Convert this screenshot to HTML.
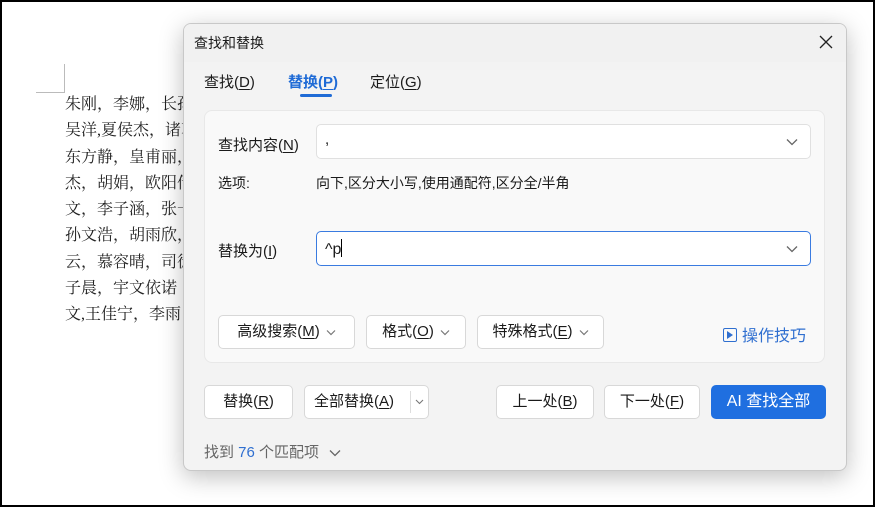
<!DOCTYPE html>
<html><head><meta charset="utf-8"><style>
*{margin:0;padding:0;box-sizing:border-box}
body{width:875px;height:507px;position:relative;background:#fff;overflow:hidden;font-family:"Liberation Sans","Noto Sans CJK SC",sans-serif;color:#1a1a1a}
.frame{position:absolute;left:0;top:0;width:875px;height:507px;border:2px solid #000;z-index:10;pointer-events:none}
.doc{position:absolute;left:65px;top:92px;font-family:"Liberation Serif","Noto Serif CJK SC",serif;font-size:16px;line-height:26.3px;color:#222;white-space:nowrap}
.crop1{position:absolute;left:64px;top:64px;width:1px;height:29px;background:#bbb}
.crop2{position:absolute;left:36px;top:92px;width:29px;height:1px;background:#bbb}
.dlg{position:absolute;left:183px;top:23px;width:664px;height:448px;background:#f3f3f3;border:1px solid #c8c8c8;border-radius:8px;box-shadow:0 6px 24px rgba(0,0,0,.25);overflow:hidden;font-size:15px}
.abs{position:absolute;white-space:nowrap}
.panel{position:absolute;left:20px;top:86px;width:621px;height:253px;background:#f9f9f9;border:1px solid #e8e8e8;border-radius:8px}
.inp{position:absolute;background:#fff;border:1px solid #e0e0e0;border-radius:5px}
.btn{position:absolute;background:#fff;border:1px solid #d8d8d8;border-radius:5px;height:34px;line-height:32px;text-align:center;font-size:15px}
svg.cv{vertical-align:middle;margin-left:6px}
u{text-decoration:underline;text-underline-offset:2px}
</style></head><body>
<div class="crop1"></div><div class="crop2"></div>
<div class="doc">朱刚，李娜，长孙<br>吴洋,夏侯杰，诸葛<br>东方静，皇甫丽，<br>杰，胡娟，欧阳倩<br>文，李子涵，张一<br>孙文浩，胡雨欣，<br>云，慕容晴，司徒<br>子晨，宇文依诺<br>文,王佳宁，李雨</div>
<div class="dlg">
 <div class="abs" style="left:0;top:0;width:664px;height:38px;background:#f1f1f1"></div>
 <div class="abs" style="left:10px;top:9px;font-size:14px">查找和替换</div>
 <svg class="abs" style="left:635px;top:11px" width="14" height="14"><path d="M1 1L13 13M13 1L1 13" stroke="#222" stroke-width="1.3"/></svg>
 <div class="abs" style="left:20px;top:47px">查找(<u>D</u>)</div>
 <div class="abs" style="left:104px;top:47px;color:#1f6bd6;font-weight:bold">替换(<u>P</u>)</div>
 <div class="abs" style="left:116px;top:70px;width:32px;height:3px;background:#1f6bd6;border-radius:2px"></div>
 <div class="abs" style="left:186px;top:47px">定位(<u>G</u>)</div>
 <div class="panel">
  <div class="abs" style="left:13px;top:23px">查找内容(<u>N</u>)</div>
  <div class="inp" style="left:111px;top:13px;width:495px;height:35px"><span class="abs" style="left:8px;top:6px">,</span><svg class="abs" style="left:469px;top:13px" width="12" height="8"><path d="M1 1.5L6 6.5L11 1.5" fill="none" stroke="#666" stroke-width="1.3"/></svg></div>
  <div class="abs" style="left:13px;top:62px;font-size:14px">选项:</div>
  <div class="abs" style="left:111px;top:62px;font-size:14px">向下,区分大小写,使用通配符,区分全/半角</div>
  <div class="abs" style="left:13px;top:129px">替换为(<u>I</u>)</div>
  <div class="inp" style="left:111px;top:120px;width:495px;height:35px;border-color:#3a7be0"><span class="abs" style="left:8px;top:7px;font-size:16px">^p<span style="display:inline-block;width:1px;height:18px;background:#000;vertical-align:-3px"></span></span><svg class="abs" style="left:469px;top:13px" width="12" height="8"><path d="M1 1.5L6 6.5L11 1.5" fill="none" stroke="#666" stroke-width="1.3"/></svg></div>
  <div class="btn" style="left:13px;top:204px;width:137px">高级搜索(<u>M</u>)<svg class="cv" width="10" height="7"><path d="M1 1.5L5 5.5L9 1.5" fill="none" stroke="#777" stroke-width="1.2"/></svg></div>
  <div class="btn" style="left:161px;top:204px;width:100px">格式(<u>O</u>)<svg class="cv" width="10" height="7"><path d="M1 1.5L5 5.5L9 1.5" fill="none" stroke="#777" stroke-width="1.2"/></svg></div>
  <div class="btn" style="left:272px;top:204px;width:127px">特殊格式(<u>E</u>)<svg class="cv" width="10" height="7"><path d="M1 1.5L5 5.5L9 1.5" fill="none" stroke="#777" stroke-width="1.2"/></svg></div>
  <div class="abs" style="left:518px;top:211px;color:#2f6fd0;font-size:16px"><span style="display:inline-block;width:14px;height:14px;border:1.3px solid #2f6fd0;border-radius:2px;position:relative;top:1px;margin-right:5px"><span style="position:absolute;left:3px;top:2px;border-left:6px solid #2f6fd0;border-top:4px solid transparent;border-bottom:4px solid transparent;width:0;height:0"></span></span>操作技巧</div>
 </div>
 <div class="btn" style="left:20px;top:361px;width:89px">替换(<u>R</u>)</div>
 <div class="btn" style="left:120px;top:361px;width:125px;text-align:left;padding-left:9px">全部替换(<u>A</u>)<span class="abs" style="left:105px;top:5px;width:1px;height:22px;background:#ddd"></span><svg class="abs" style="left:110px;top:13px" width="9" height="6"><path d="M1 1L4.5 4.5L8 1" fill="none" stroke="#777" stroke-width="1.1"/></svg></div>
 <div class="btn" style="left:312px;top:361px;width:98px">上一处(<u>B</u>)</div>
 <div class="btn" style="left:420px;top:361px;width:96px">下一处(<u>F</u>)</div>
 <div class="btn" style="left:527px;top:361px;width:115px;background:#1f6fe0;border-color:#1f6fe0;color:#fff;font-size:16px">AI 查找全部</div>
 <div class="abs" style="left:20px;top:417px;color:#666;font-size:15px">找到 <span style="color:#2f6fd0">76</span> 个匹配项<svg class="cv" style="margin-left:10px" width="12" height="8"><path d="M1 1.5L6 6.5L11 1.5" fill="none" stroke="#666" stroke-width="1.3"/></svg></div>
</div>
<div class="frame"></div>
</body></html>
